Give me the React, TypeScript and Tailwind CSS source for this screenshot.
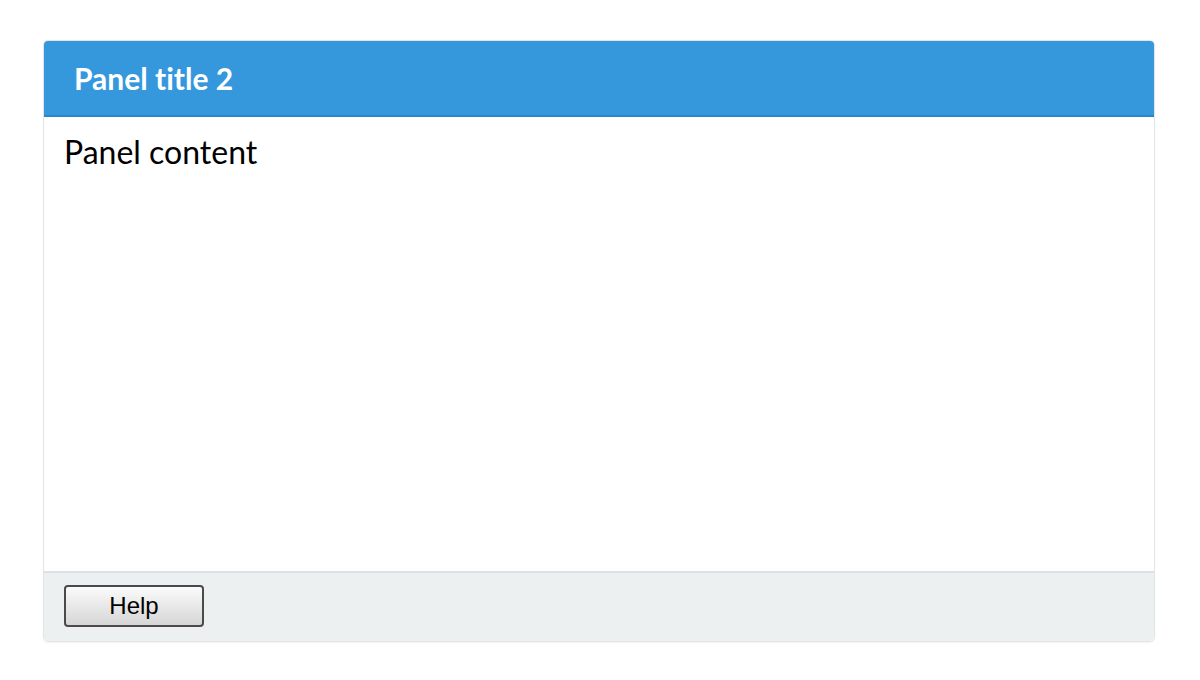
export default function App() {
  return (
    <div className="min-h-[680px] bg-white pl-[43px] pt-[40px] [font-variant-ligatures:none]" style={{ fontFamily: 'Lato, sans-serif' }}>
      <div className="flex h-[602px] w-[1112px] flex-col overflow-hidden rounded-[5px] border border-[#e3e6e8] shadow-[0_1px_2px_rgba(0,0,0,0.06)]">
        <div className="flex h-[76px] shrink-0 items-center border-b-2 border-[#2b87c8] bg-[#3598dc] pl-[30px]">
          <h1 className="text-[30px] font-bold leading-none text-white">Panel title 2</h1>
        </div>
        <div className="flex-1 bg-white px-[20px] pt-[16px]">
          <p className="text-[32px] leading-[38px] text-black">Panel content</p>
        </div>
        <div className="flex h-[70px] shrink-0 items-start border-t-2 border-[#dde1e3] bg-[#ecf0f1] px-[20px] pt-[12px]">
          <button
            type="button"
            className="h-[42px] w-[140px] rounded-[4px] border-2 border-[#4a4a4a] bg-gradient-to-b from-[#fbfbfb] to-[#d6d6d6] text-[24px] leading-none text-black"
            style={{ fontFamily: '"Liberation Sans", Arial, sans-serif' }}
          >
            Help
          </button>
        </div>
      </div>
    </div>
  );
}
